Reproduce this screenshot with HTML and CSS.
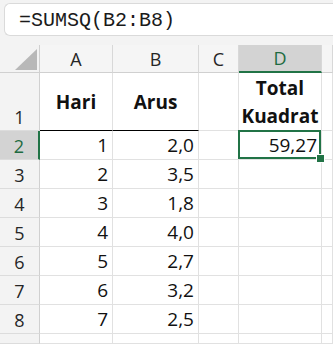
FILE: index.html
```html
<!DOCTYPE html>
<html lang="id">
<head>
  <meta charset="UTF-8" />
  <title>SUMSQ</title>
  <link rel="stylesheet" href="styles.css">
</head>
<body>
  <div class="formula-wrap">
    <div class="formula">=SUMSQ(B2:B8)</div>
  </div>

  <div class="sheet">
    <!-- column headers -->
    <div class="corner">
      <svg width="40" height="28" viewBox="0 0 40 28"><polygon points="15,25 37,25 37,4" fill="#b8b8b8"/></svg>
    </div>
    <div class="col-hd">A</div>
    <div class="col-hd">B</div>
    <div class="col-hd">C</div>
    <div class="col-hd sel">D</div>
    <div class="col-hd"></div>

    <!-- row 1 -->
    <div class="row-hd">1</div>
    <div class="cell head under">Hari</div>
    <div class="cell head under">Arus</div>
    <div class="cell"></div>
    <div class="cell head">Total<br>Kuadrat</div>
    <div class="cell"></div>

    <div class="row-hd sel">2</div>
    <div class="cell num">1</div>
    <div class="cell num">2,0</div>
    <div class="cell"></div>
    <div class="cell num active">59,27</div>
    <div class="cell"></div>

    <div class="row-hd">3</div>
    <div class="cell num">2</div>
    <div class="cell num">3,5</div>
    <div class="cell"></div><div class="cell"></div><div class="cell"></div>

    <div class="row-hd">4</div>
    <div class="cell num">3</div>
    <div class="cell num">1,8</div>
    <div class="cell"></div><div class="cell"></div><div class="cell"></div>

    <div class="row-hd">5</div>
    <div class="cell num">4</div>
    <div class="cell num">4,0</div>
    <div class="cell"></div><div class="cell"></div><div class="cell"></div>

    <div class="row-hd">6</div>
    <div class="cell num">5</div>
    <div class="cell num">2,7</div>
    <div class="cell"></div><div class="cell"></div><div class="cell"></div>

    <div class="row-hd">7</div>
    <div class="cell num">6</div>
    <div class="cell num">3,2</div>
    <div class="cell"></div><div class="cell"></div><div class="cell"></div>

    <div class="row-hd">8</div>
    <div class="cell num">7</div>
    <div class="cell num">2,5</div>
    <div class="cell"></div><div class="cell"></div><div class="cell"></div>

    <!-- row 9, cut by the window -->
    <div class="row-hd"></div>
    <div class="cell"></div><div class="cell"></div><div class="cell"></div><div class="cell"></div><div class="cell"></div>
  </div>
</body>
</html>
```

FILE: styles.css
```css
* { box-sizing: border-box; margin: 0; padding: 0; }
body {
  background: #f3f3f3;
  font-family: 'Open Sans', sans-serif;
  color: #1f1f1f;
  width: 333px;
  height: 344px;
  overflow: hidden;
}

/* Formula bar */
.formula-wrap {
  padding: 3px 0 9px 4px;
}
.formula {
  height: 33px;
  background: #fff;
  border: 1px solid #dadada;
  border-right: none;
  border-radius: 6px 0 0 6px;
  padding-left: 14px;
  font-family: 'Liberation Mono', monospace;
  font-size: 20px;
  line-height: 33px;
  color: #1a1a1a;
}

/* Grid */
.sheet {
  display: grid;
  grid-template-columns: 40px 73px 86px 40px 83px 1fr;
  grid-template-rows: 28px 58px repeat(7, 29px) 10px;
  background: #fff;
}
.corner {
  background: #f3f3f3;
  border-right: 1px solid #d0d0d0;
  border-bottom: 1px solid #d0d0d0;
}
.corner svg { display: block; }

.col-hd {
  background: #f5f5f5;
  border-right: 1px solid #d8d8d8;
  border-bottom: 1px solid #d0d0d0;
  display: flex;
  align-items: center;
  justify-content: center;
  font-size: 18px;
  color: #262626;
}
.col-hd.sel {
  background: #d3d3d3;
  color: #1e6b41;
  border-bottom: 2px solid #217346;
}

.row-hd {
  background: #f3f3f3;
  border-right: 1px solid #d0d0d0;
  border-bottom: 1px solid #dcdcdc;
  display: flex;
  align-items: flex-end;
  justify-content: center;
  padding-bottom: 1px;
  font-size: 18px;
  color: #262626;
}
.row-hd.sel {
  background: #d3d3d3;
  color: #1e6b41;
  border-right: 2px solid #217346;
}

.cell {
  border-right: 1px solid #e1e1e1;
  border-bottom: 1px solid #e1e1e1;
  font-size: 19px;
  color: #111;
  position: relative;
}
.cell.head {
  display: flex;
  align-items: center;
  justify-content: center;
  text-align: center;
  font-weight: 700;
  line-height: 28px;
}
.cell.under { border-bottom-color: #000; }
.cell.num {
  display: flex;
  align-items: flex-end;
  justify-content: flex-end;
  padding: 0 4px 1px 0;
}

/* Selected cell */
.cell.active::after {
  content: "";
  position: absolute;
  top: -1px; left: -1px; right: 0; bottom: 0;
  border: 2px solid #217346;
}
.cell.active::before {
  content: "";
  position: absolute;
  right: -4px; bottom: -4px;
  width: 7px; height: 7px;
  background: #217346;
  border: 1px solid #fff;
  z-index: 2;
}
```
